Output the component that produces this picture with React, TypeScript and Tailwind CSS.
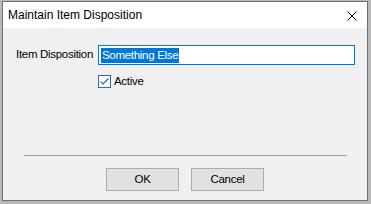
export default function App() {
  const font = { fontFamily: '"Liberation Sans", Arial, sans-serif' };
  return (
    <div className="w-[371px] h-[204px] bg-[#b9b9b9] pt-[1px] pl-[2px] overflow-hidden" style={font}>
      <div className="w-[366px] h-[200px] border border-[#6e6e6e] bg-[#f0f0f0] flex flex-col">
        {/* title bar */}
        <div className="h-[26px] bg-white flex items-center justify-between pl-[5px] pr-[10px]">
          <span className="text-[12px] text-black leading-none whitespace-nowrap">Maintain Item Disposition</span>
          <svg width="10" height="10" viewBox="0 0 10 10" className="mt-[1px]">
            <path d="M0.5 0.5 L9.5 9.5 M9.5 0.5 L0.5 9.5" stroke="#000" strokeWidth="1" />
          </svg>
        </div>

        {/* body */}
        <div className="flex flex-col pt-[17px] text-[11.5px] tracking-[-0.3px]">
          <div className="flex items-center h-[20px]">
            <span className="w-[95px] pl-[13px] text-black leading-none whitespace-nowrap">Item Disposition</span>
            <div className="w-[257px] h-[20px] border border-[#0078d7] bg-white flex items-center pl-[2px]">
              <span className="bg-[#0078d7] text-white leading-[15px] px-[1px] whitespace-nowrap">Something Else</span>
            </div>
          </div>

          <div className="flex items-center mt-[10px] ml-[95px] h-[13px] gap-[3px]">
            <div className="w-[13px] h-[13px] border border-[#2b6cb6] bg-white flex items-center justify-center">
              <svg width="11" height="11" viewBox="0 0 11 11">
                <path d="M1.5 5.5 L4 8 L9.5 2.5" stroke="#2b6cb6" strokeWidth="1.2" fill="none" />
              </svg>
            </div>
            <span className="text-black leading-none">Active</span>
          </div>

          <div className="mt-[67px] ml-[21px] w-[323px] h-px bg-[#a0a0a0]" />

          <div className="flex mt-[12px] ml-[103px] gap-[12px]">
            <button className="w-[73px] h-[23px] bg-[#e1e1e1] border border-[#adadad] text-black leading-none">
              OK
            </button>
            <button className="w-[73px] h-[23px] bg-[#e1e1e1] border border-[#adadad] text-black leading-none">
              Cancel
            </button>
          </div>
        </div>
      </div>
    </div>
  );
}
